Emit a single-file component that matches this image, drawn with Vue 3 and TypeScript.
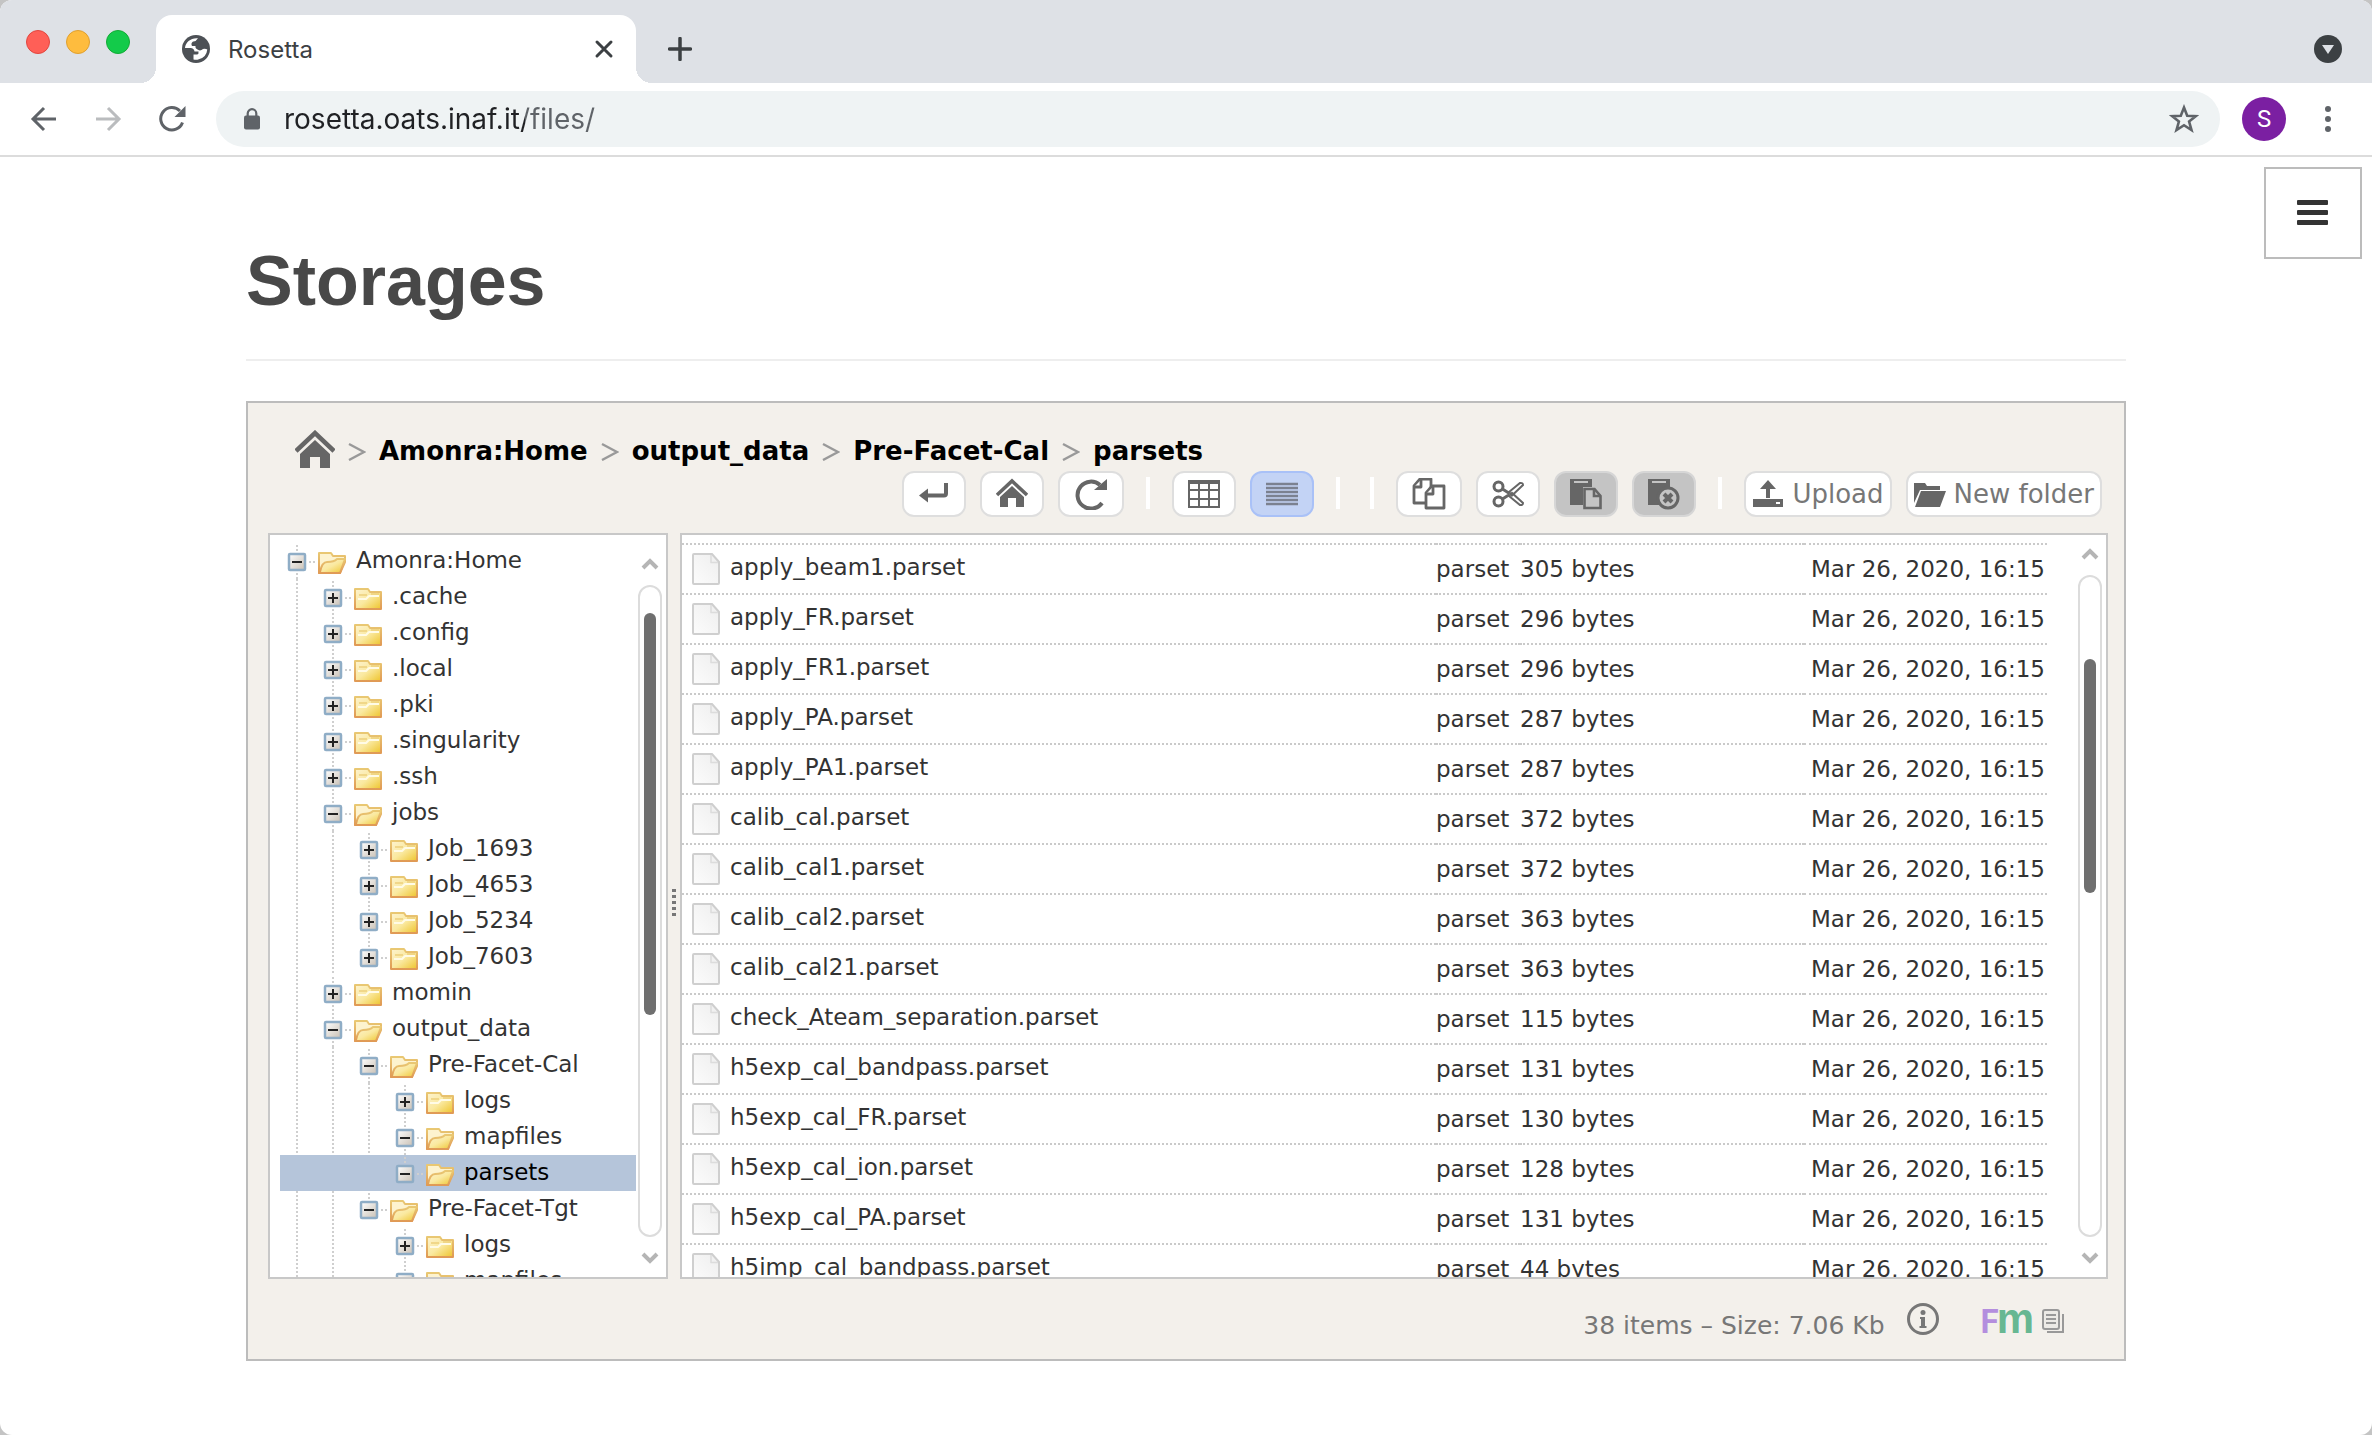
<script setup lang="ts">
import { ref } from 'vue'

interface TreeRow {
  name: string
  depth: number
  open?: boolean
  last?: boolean
  guides: boolean[]
  selected?: boolean
}

interface FileRow {
  name: string
  size: string
}

const address = ref('rosetta.oats.inaf.it/files/')

const tree: TreeRow[] = [
  { name: 'Amonra:Home', depth: 0, open: true, guides: [] },
  { name: '.cache', depth: 1, guides: [true] },
  { name: '.config', depth: 1, guides: [true] },
  { name: '.local', depth: 1, guides: [true] },
  { name: '.pki', depth: 1, guides: [true] },
  { name: '.singularity', depth: 1, guides: [true] },
  { name: '.ssh', depth: 1, guides: [true] },
  { name: 'jobs', depth: 1, open: true, guides: [true] },
  { name: 'Job_1693', depth: 2, guides: [true, true] },
  { name: 'Job_4653', depth: 2, guides: [true, true] },
  { name: 'Job_5234', depth: 2, guides: [true, true] },
  { name: 'Job_7603', depth: 2, last: true, guides: [true, true] },
  { name: 'momin', depth: 1, guides: [true] },
  { name: 'output_data', depth: 1, open: true, guides: [true] },
  { name: 'Pre-Facet-Cal', depth: 2, open: true, guides: [true, true] },
  { name: 'logs', depth: 3, guides: [true, true, true] },
  { name: 'mapfiles', depth: 3, open: true, guides: [true, true, true] },
  { name: 'parsets', depth: 3, open: true, last: true, guides: [false, false, false], selected: true },
  { name: 'Pre-Facet-Tgt', depth: 2, open: true, last: true, guides: [true, true] },
  { name: 'logs', depth: 3, guides: [true, true, false] },
  { name: 'mapfiles', depth: 3, open: true, guides: [true, true, false] },
]

const files: FileRow[] = [
  { name: 'apply_beam1.parset', size: '305 bytes' },
  { name: 'apply_FR.parset', size: '296 bytes' },
  { name: 'apply_FR1.parset', size: '296 bytes' },
  { name: 'apply_PA.parset', size: '287 bytes' },
  { name: 'apply_PA1.parset', size: '287 bytes' },
  { name: 'calib_cal.parset', size: '372 bytes' },
  { name: 'calib_cal1.parset', size: '372 bytes' },
  { name: 'calib_cal2.parset', size: '363 bytes' },
  { name: 'calib_cal21.parset', size: '363 bytes' },
  { name: 'check_Ateam_separation.parset', size: '115 bytes' },
  { name: 'h5exp_cal_bandpass.parset', size: '131 bytes' },
  { name: 'h5exp_cal_FR.parset', size: '130 bytes' },
  { name: 'h5exp_cal_ion.parset', size: '128 bytes' },
  { name: 'h5exp_cal_PA.parset', size: '131 bytes' },
  { name: 'h5imp_cal_bandpass.parset', size: '44 bytes' },
]

const crumbs: string[] = ['Amonra:Home', 'output_data', 'Pre-Facet-Cal', 'parsets']
</script>

<template>
  <div class="window">
    <svg class="defs" width="0" height="0" aria-hidden="true">
      <defs>
        <linearGradient id="folder-fill" x1="0" y1="0" x2="1" y2="1">
          <stop offset="0" stop-color="#fdf3cf" />
          <stop offset="0.5" stop-color="#fae9a0" />
          <stop offset="1" stop-color="#eec42c" />
        </linearGradient>
        <linearGradient id="folder-edge" x1="0" y1="0" x2="0" y2="1">
          <stop offset="0" stop-color="#e9c873" />
          <stop offset="1" stop-color="#e09a55" />
        </linearGradient>
        <linearGradient id="box-fill" x1="0" y1="0" x2="1" y2="1">
          <stop offset="0" stop-color="#ffffff" />
          <stop offset="1" stop-color="#c9c0b4" />
        </linearGradient>
        <linearGradient id="page-fill" x1="1" y1="0" x2="0" y2="1">
          <stop offset="0" stop-color="#eeeeee" />
          <stop offset="1" stop-color="#fcfcfc" />
        </linearGradient>
      </defs>
    </svg>

    <header class="tabstrip">
      <div class="lights">
        <button class="light red" aria-label="Close window"></button>
        <button class="light yellow" aria-label="Minimise window"></button>
        <button class="light green" aria-label="Zoom window"></button>
      </div>
      <div class="tab">
        <svg class="icon" width="28" height="28" viewBox="0 0 28 28">
          <circle cx="14" cy="14" r="14" fill="#4d5156" />
          <path d="M16 3.200C9 2.500 3.500 7 3 13h5.500q3.500 0 4 3.500h4q.500 2.500-1.500 3h-3.500v5q2 .500 4 .200 9-1.500 9.800-10.200-1.500-1-4.300-.600-2.500 2.500-5 .800-3-1-2.500-3.700h-3.500q-1.500-2.800 1-4.500 2.500.500 5-3.300z" fill="#fff" />
        </svg>
        <span class="tab-title">Rosetta</span>
        <button class="plain" aria-label="Close tab">
          <svg width="20" height="20" viewBox="0 0 20 20"><path d="M3 3l14 14M17 3L3 17" stroke="#3c4043" stroke-width="3" fill="none" stroke-linecap="round" /></svg>
        </button>
      </div>
      <button class="plain new-tab" aria-label="New tab">
        <svg width="24" height="24" viewBox="0 0 24 24"><path d="M12 1.500v21M1.500 12h21" stroke="#3c4043" stroke-width="3.500" stroke-linecap="round" /></svg>
      </button>
      <button class="plain tab-search" aria-label="Search tabs">
        <svg width="28" height="28" viewBox="0 0 28 28"><circle cx="14" cy="14" r="14" fill="#3c4043" /><path d="M8 10h12l-6 9z" fill="#dee1e6" /></svg>
      </button>
    </header>

    <nav class="toolbar" aria-label="Browser">
      <button class="plain" aria-label="Back">
        <svg width="28" height="28" viewBox="0 0 28 28"><path d="M26 14H3M14 3L3 14l11 11" stroke="#5f6368" stroke-width="3" fill="none" /></svg>
      </button>
      <button class="plain" aria-label="Forward">
        <svg width="28" height="28" viewBox="0 0 28 28"><path d="M2 14h23M14 3l11 11-11 11" stroke="#babcbe" stroke-width="3" fill="none" /></svg>
      </button>
      <button class="plain" aria-label="Reload">
        <svg width="28" height="28" viewBox="0 0 28 28"><path d="M24.500 17.500A11.200 11.200 0 1 1 22 6" stroke="#5f6368" stroke-width="3" fill="none" /><path d="M27.500 1v11h-11z" fill="#5f6368" /></svg>
      </button>
      <div class="omnibox">
        <svg width="16" height="22" viewBox="0 0 16 22"><rect y="7.500" width="16" height="14" rx="2" fill="#5f6368" /><path d="M3.700 8V5.500a4.300 4.300 0 0 1 8.600 0V8" stroke="#5f6368" stroke-width="2.200" fill="none" /></svg>
        <input v-model="address" class="address" type="text" aria-label="Address" />
        <button class="plain" aria-label="Bookmark">
          <svg width="30" height="30" viewBox="0 0 30 30"><path d="M15 3.500l3.200 8.200 8.800.4-6.900 5.500 2.400 8.500-7.500-4.900-7.500 4.900 2.400-8.500L3 12.100l8.800-.4z" stroke="#5f6368" stroke-width="2.600" fill="none" /></svg>
        </button>
      </div>
      <button class="avatar" aria-label="Profile">S</button>
      <button class="plain" aria-label="Browser menu">
        <svg width="28" height="28" viewBox="0 0 28 28" fill="#5f6368"><circle cx="14" cy="4" r="3" /><circle cx="14" cy="14" r="3" /><circle cx="14" cy="24" r="3" /></svg>
      </button>
    </nav>

    <main class="page">
      <button class="menu" aria-label="Menu">
        <svg width="32" height="28" viewBox="0 0 32 28" fill="#333"><rect y="1" width="31" height="5" rx="1" /><rect y="11" width="31" height="5" rx="1" /><rect y="21" width="31" height="5" rx="1" /></svg>
      </button>
      <div class="container">
        <h1 class="title">Storages</h1>

        <section class="manager" aria-label="File manager">
          <div class="crumbs">
            <a class="crumb-home" href="#" aria-label="Home">
              <svg width="40" height="38" viewBox="0 0 40 38"><path d="M1 21L20 3l19 18" stroke="#666" stroke-width="4.500" fill="none" /><path d="M5 24L20 10l15 14v14H25V27H15v11H5z" fill="#666" /></svg>
            </a>
            <template v-for="crumb in crumbs" :key="crumb">
              <svg class="crumb-sep" width="18" height="20" viewBox="0 0 18 20"><path d="M1 3l15 8-15 8" stroke="#999" stroke-width="2.400" fill="none" /></svg>
              <a class="crumb" href="#">{{ crumb }}</a>
            </template>
          </div>

          <div class="actions">
            <button class="action" aria-label="Parent folder">
              <svg width="32" height="32" viewBox="0 0 32 32"><path d="M28 5v10.500q0 2-2 2H8" stroke="#666" stroke-width="4" fill="none" /><path d="M1 17.500l9-7v14z" fill="#666" /></svg>
            </button>
            <button class="action" aria-label="Go home">
              <svg width="32" height="32" viewBox="0 0 32 32"><path d="M1 17L16 3l15 14" stroke="#666" stroke-width="3.500" fill="none" /><path d="M4 19L16 8l12 11v10h-8v-9h-8v9H4z" fill="#666" /></svg>
            </button>
            <button class="action" aria-label="Refresh">
              <svg width="34" height="32" viewBox="0 0 34 32"><path d="M28 25A13.500 13.500 0 1 1 26 7" stroke="#666" stroke-width="4" fill="none" /><path d="M33 1v11H20z" fill="#666" /></svg>
            </button>
            <span class="divider"></span>
            <button class="action" aria-label="Icon view">
              <svg width="32" height="32" viewBox="0 0 32 32" fill="none" stroke="#666" stroke-width="2"><path d="M1 3v26h30V3M1 12h30M1 21h30M1 29h30M11 4v25M21 4v25" /><path d="M0 4h32" stroke-width="4" /></svg>
            </button>
            <button class="action active" aria-label="List view" aria-pressed="true">
              <svg width="32" height="32" viewBox="0 0 32 32" stroke="#7b8190" stroke-width="2.400"><path d="M0 6h32M0 10h32M0 14h32M0 18h32M0 22h32M0 26h32" /></svg>
            </button>
            <span class="divider"></span>
            <span class="divider"></span>
            <button class="action" aria-label="Copy">
              <svg width="34" height="32" viewBox="0 0 34 32" fill="#fff" stroke="#666" stroke-width="2.800" stroke-linejoin="round"><path d="M2 8l6-7h11v24H2z" /><path d="M2 9h7V2" /><path d="M14 15l6-7h12v22H14z" /><path d="M14 16h7V9" /></svg>
            </button>
            <button class="action" aria-label="Cut">
              <svg width="32" height="32" viewBox="0 0 32 32" fill="none" stroke="#666" stroke-width="3"><circle cx="6.500" cy="8.500" r="4.500" /><circle cx="6.500" cy="23.500" r="4.500" /><path d="M10.500 11l7 4.500M10.500 21l7-4.500" /><path d="M17 14l11-9q3-.500 3 2L20 17.500zM17 18l11 9q3 .500 3-2L20 15z" stroke-width="2" /></svg>
            </button>
            <button class="action off" aria-label="Paste" disabled>
              <svg width="32" height="32" viewBox="0 0 32 32"><path d="M0 1h22v8h-9v18H0z" fill="#666" /><path d="M4 4h14" stroke="#c4c4c4" stroke-width="2" /><path d="M14.500 11h10l6 7v12h-16z" fill="#c4c4c4" stroke="#666" stroke-width="2.600" /><path d="M24 11v7h7" stroke="#666" stroke-width="2.600" fill="none" /></svg>
            </button>
            <button class="action off" aria-label="Clear clipboard" disabled>
              <svg width="32" height="32" viewBox="0 0 32 32"><path d="M0 1h22v20l-9 6H0z" fill="#666" /><path d="M4 4h14" stroke="#c4c4c4" stroke-width="2" /><circle cx="20" cy="20" r="10" fill="#c4c4c4" stroke="#666" stroke-width="3" /><path d="M16 16l8 8M24 16l-8 8" stroke="#666" stroke-width="4" /></svg>
            </button>
            <span class="divider"></span>
            <button class="action wide">
              <svg width="32" height="32" viewBox="0 0 32 32" fill="#666"><path d="M16 2l8 9h-6v9h-4v-9H8z" /><path d="M1 21h30v8H1z" /><rect x="24" y="24" width="4" height="2" fill="#fff" /></svg>
              Upload
            </button>
            <button class="action wide">
              <svg width="32" height="32" viewBox="0 0 32 32" fill="#666"><path d="M0 5h11l2 3h13v4H6L0 25z" /><path d="M7 13h25l-6 16H1z" /></svg>
              New folder
            </button>
          </div>

          <div class="panes">
            <div class="pane tree-pane">
              <ul class="tree">
                <li v-for="(row, i) in tree" :key="i" class="tree-row" :class="{ selected: row.selected }">
                  <svg v-for="(line, g) in row.guides" :key="g" width="36" height="36" viewBox="0 0 36 36">
                    <path v-if="line" d="M17 0v36" stroke="#cfcfcf" stroke-width="2" stroke-dasharray="2 2" />
                  </svg>
                  <button class="plain" :aria-label="(row.open ? 'Collapse ' : 'Expand ') + row.name">
                    <svg width="38" height="36" viewBox="0 0 38 36">
                      <path :d="row.last ? 'M17 2v8' : 'M17 2v34'" stroke="#cfcfcf" stroke-width="2" stroke-dasharray="2 2" />
                      <path d="M29 19h8" stroke="#cfcfcf" stroke-width="2" stroke-dasharray="2 2" />
                      <rect x="9" y="11" width="16" height="16" rx="1" fill="url(#box-fill)" stroke="#8fadc6" stroke-width="2.500" />
                      <path :d="row.open ? 'M12 19h10' : 'M12 19h10M17 14v10'" stroke="#222" stroke-width="2" />
                    </svg>
                  </button>
                  <svg class="folder" width="28" height="24" viewBox="0 0 28 24" stroke="url(#folder-edge)" stroke-width="2" stroke-linejoin="round">
                    <template v-if="row.open">
                      <path d="M1 22V2h12l2 3h12v6l-5 11z" fill="#fdf3cf" />
                      <path d="M2 21Q4 11 9 11q7 0 10-3h8l-5 14H1z" fill="url(#folder-fill)" />
                    </template>
                    <template v-else>
                      <path d="M1 22V2h13l2 3h11v17z" fill="url(#folder-fill)" />
                      <path d="M4 12h8l3-3h10" stroke="#fffbe6" fill="none" />
                      <path d="M5 8h8M17 7h8" stroke="#edcf7c" stroke-width="1.500" />
                    </template>
                  </svg>
                  <a class="tree-name" href="#">{{ row.name }}</a>
                </li>
              </ul>
              <div class="scroll tree-scroll">
                <svg width="18" height="14" viewBox="0 0 18 14"><path d="M2 11l7-7 7 7" stroke="#b5b5b5" stroke-width="4" fill="none" /></svg>
                <div class="track"><div class="thumb tree-thumb"></div></div>
                <svg width="18" height="14" viewBox="0 0 18 14"><path d="M2 3l7 7 7-7" stroke="#b5b5b5" stroke-width="4" fill="none" /></svg>
              </div>
            </div>

            <div class="splitter"><span class="grip"></span></div>

            <div class="pane list-pane">
              <div class="list">
                <table class="files">
                  <tbody>
                    <tr v-for="file in files" :key="file.name">
                      <td class="c-name">
                        <div class="file">
                          <svg width="28" height="32" viewBox="0 0 28 32"><path d="M1 2q0-1 1-1h18l7 8v21q0 1-1 1H2q-1 0-1-1z" fill="url(#page-fill)" stroke="#cfcfcf" stroke-width="2" /><path d="M19 2v7.500h7" stroke="#dcdcdc" stroke-width="1.500" fill="none" /></svg>
                          <span class="file-name">{{ file.name }}</span>
                        </div>
                      </td>
                      <td class="c-type">parset</td>
                      <td class="c-size">{{ file.size }}</td>
                      <td class="c-date">Mar 26, 2020, 16:15</td>
                    </tr>
                  </tbody>
                </table>
              </div>
              <div class="scroll list-scroll">
                <svg width="18" height="14" viewBox="0 0 18 14"><path d="M2 11l7-7 7 7" stroke="#b5b5b5" stroke-width="4" fill="none" /></svg>
                <div class="track"><div class="thumb list-thumb"></div></div>
                <svg width="18" height="14" viewBox="0 0 18 14"><path d="M2 3l7 7 7-7" stroke="#b5b5b5" stroke-width="4" fill="none" /></svg>
              </div>
            </div>
          </div>

          <footer class="status">
            <span class="summary">38 items – Size: 7.06 Kb</span>
            <button class="plain info" aria-label="Information">
              <svg width="32" height="32" viewBox="0 0 32 32"><circle cx="16" cy="16" r="14.500" stroke="#777" stroke-width="3" fill="none" /><circle cx="16" cy="9.500" r="2.500" fill="#777" /><path d="M13 14h5v9h1.500v2h-7v-2H14v-7h-1z" fill="#777" /></svg>
            </button>
            <a class="brand" href="#"><span class="brand-f">F</span><span class="brand-m">m</span></a>
            <svg class="pages" width="22" height="24" viewBox="0 0 22 24" fill="none" stroke="#999" stroke-width="2"><path d="M5 23h16V5" /><rect x="1" y="1" width="16" height="19" rx="2" fill="#eceae6" /><path d="M4 6h10M4 10h10M4 14h10" /></svg>
          </footer>
        </section>
      </div>
    </main>
  </div>
</template>

<style>
body {
  margin: 0;
  background: #c4c4c4;
}
</style>

<style scoped>
.window {
  min-height: 100vh;
  display: flex;
  flex-direction: column;
  overflow: hidden;
  border-radius: 12px;
  background: #fff;
  font-family: "DejaVu Sans", sans-serif;
  font-size: 23px;
  color: #333;
}
.window * {
  box-sizing: border-box;
}
.window svg {
  display: block;
  flex: none;
}
.window .defs {
  position: absolute;
}
.plain {
  display: block;
  padding: 0;
  border: 0;
  background: none;
}
.window a {
  color: inherit;
  text-decoration: none;
}

/* Browser chrome */
.tabstrip {
  display: flex;
  align-items: flex-end;
  height: 83px;
  padding-right: 30px;
  background: #dee1e6;
  font-family: Inter, sans-serif;
}
.lights {
  display: flex;
  gap: 16px;
  padding: 0 26px 29px;
}
.light {
  width: 24px;
  height: 24px;
  padding: 0;
  border: 1px solid;
  border-radius: 50%;
}
.red {
  background: #ff5f57;
  border-color: #e2463f;
}
.yellow {
  background: #febc3e;
  border-color: #e0a02f;
}
.green {
  background: #13cb4a;
  border-color: #12ab35;
}
.tab {
  position: relative;
  display: flex;
  align-items: center;
  width: 480px;
  height: 68px;
  padding: 0 22px 0 26px;
  border-radius: 16px 16px 0 0;
  background: #fff;
}
.tab::before,
.tab::after {
  content: "";
  position: absolute;
  bottom: 0;
  width: 16px;
  height: 16px;
}
.tab::before {
  right: 100%;
  background: radial-gradient(circle at 0 0, transparent 16px, #fff 16px);
}
.tab::after {
  left: 100%;
  background: radial-gradient(circle at 100% 0, transparent 16px, #fff 16px);
}
.tab-title {
  flex: 1;
  padding-left: 18px;
  font-size: 24px;
  color: #3c4043;
}
.new-tab {
  margin: 0 0 22px 32px;
}
.tab-search {
  margin: 0 0 20px auto;
}
.toolbar {
  display: flex;
  align-items: center;
  gap: 36px;
  height: 74px;
  padding: 0 30px;
  border-bottom: 2px solid #dcdcdc;
  font-family: Inter, sans-serif;
}
.omnibox {
  display: flex;
  flex: 1;
  align-items: center;
  height: 56px;
  margin: 0 -14px 0 -6px;
  padding: 0 21px 0 28px;
  border-radius: 28px;
  background: #eff3f4;
}
.address {
  flex: 1;
  min-width: 0;
  padding: 0 0 0 24px;
  border: 0;
  outline: 0;
  background: linear-gradient(90deg, #202124 265px, #5f6368 265px);
  background-clip: text;
  -webkit-text-fill-color: transparent;
  font: 28px Inter, sans-serif;
}
.avatar {
  width: 44px;
  height: 44px;
  margin-right: -8px;
  padding: 0;
  border: 0;
  border-radius: 50%;
  background: #7b1fa2;
  color: #fff;
  font: 24px Roboto, sans-serif;
}

/* Page */
.page {
  position: relative;
  padding: 0 24px 74px;
}
.menu {
  position: absolute;
  top: 10px;
  right: 10px;
  display: flex;
  align-items: center;
  justify-content: center;
  width: 98px;
  height: 92px;
  padding: 0;
  border: 2px solid #bcbcbc;
  background: #fff;
}
.container {
  max-width: 1880px;
  margin: 0 auto;
}
.title {
  margin: 0 0 40px;
  padding: 82px 0 36px;
  border-bottom: 2px solid #eee;
  font: bold 70px/84px "Liberation Sans", sans-serif;
  color: #484848;
}
.manager {
  padding: 27px 16px 0 20px;
  border: 2px solid #bcbcbc;
  background: #f3f0eb;
}
.crumbs {
  display: flex;
  align-items: center;
  gap: 13px;
  height: 41px;
  padding-left: 27px;
  font-size: 26px;
  font-weight: bold;
}
.crumb-home {
  align-self: flex-start;
}
.window .crumb {
  color: #000;
}
.actions {
  display: flex;
  justify-content: flex-end;
  gap: 14px;
  margin-bottom: 16px;
  padding-right: 6px;
}
.action {
  display: flex;
  align-items: center;
  height: 46px;
  padding: 0 14px;
  border: 2px solid #dedede;
  border-radius: 12px;
  background: #fff;
  font: 26px "DejaVu Sans", sans-serif;
  color: #777;
}
.action.active {
  border-color: #a9c1f7;
  background: #c3d3f5;
}
.action.off {
  border-color: #d6d6d6;
  background: #c4c4c4;
}
.action.wide {
  gap: 8px;
  padding: 0 6px;
}
.divider {
  width: 4px;
  height: 32px;
  margin: 6px 8px 0;
  background: #fff;
}
.panes {
  display: flex;
}
.pane {
  display: flex;
  height: 746px;
  overflow: hidden;
  border: 2px solid #c8c8c8;
  background: #fff;
}
.tree-pane {
  flex: none;
  width: 400px;
}
.tree {
  flex: 1;
  margin: 0;
  padding: 8px 0 0 10px;
  list-style: none;
}
.tree-row {
  display: flex;
  align-items: center;
  height: 36px;
}
.tree-row.selected {
  background: #b5c5da;
}
.tree-row.selected .tree-name {
  color: #000;
}
.folder {
  margin-top: 4px;
}
.tree-name {
  padding: 0 0 2px 10px;
  line-height: 34px;
}
.scroll {
  display: flex;
  flex: none;
  flex-direction: column;
  align-items: center;
  width: 30px;
  padding: 22px 4px 12px 2px;
  gap: 14px;
}
.list-scroll {
  padding-top: 12px;
}
.track {
  flex: 1;
  width: 24px;
  padding: 0 4px;
  border: 2px solid #dcdcdc;
  border-radius: 12px;
}
.thumb {
  border-radius: 6px;
  background: #6f6f6f;
}
.tree-thumb {
  height: 402px;
  margin-top: 26px;
}
.list-thumb {
  height: 234px;
  margin-top: 82px;
}
.splitter {
  display: flex;
  flex: none;
  align-items: center;
  justify-content: center;
  width: 12px;
}
.grip {
  width: 4px;
  height: 28px;
  margin-bottom: 6px;
  background: repeating-linear-gradient(#777 0 3px, transparent 3px 6px);
}
.list-pane {
  flex: 1;
  min-width: 0;
}
.list {
  flex: 1;
  padding: 8px 29px 0 0;
}
.files {
  width: 100%;
  border-spacing: 0;
}
.files td {
  height: 50px;
  padding: 0;
  border-top: 2px dotted #cacaca;
  white-space: nowrap;
}
.c-type {
  width: 84px;
}
.c-size {
  width: 284px;
}
.files .c-date {
  width: 243px;
  padding-right: 2px;
  text-align: right;
}
.file {
  display: flex;
  align-items: center;
  gap: 10px;
  padding-left: 10px;
}
.file-name {
  padding-bottom: 4px;
}

.status {
  display: flex;
  align-items: center;
  justify-content: flex-end;
  height: 80px;
  padding-right: 44px;
  color: #777;
}
.summary {
  padding-top: 12px;
  font-size: 25px;
}
.info {
  margin: 0 42px 0 22px;
}
.brand {
  display: flex;
  align-items: baseline;
  height: 24px;
  margin-right: 8px;
  line-height: 24px;
  font-family: "Liberation Sans", sans-serif;
  font-weight: bold;
}
.brand-f {
  font-size: 33px;
  font-family: Roboto, sans-serif;
  color: #b48ede;
}
.brand-m {
  margin-left: -2px;
  font-size: 42px;
  color: #67b792;
}
.pages {
  margin-top: 4px;
}
</style>
